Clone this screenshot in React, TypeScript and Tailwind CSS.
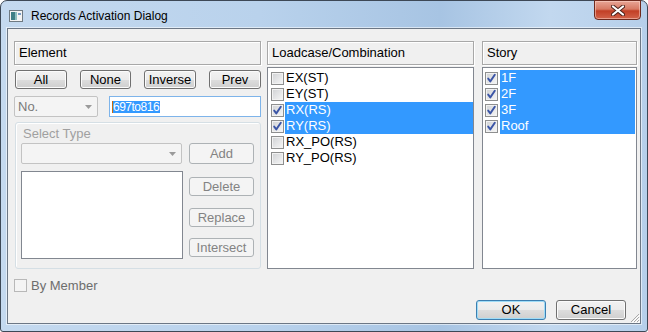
import React from 'react';

const loadcases = [
  { name: 'EX(ST)', on: false },
  { name: 'EY(ST)', on: false },
  { name: 'RX(RS)', on: true },
  { name: 'RY(RS)', on: true },
  { name: 'RX_PO(RS)', on: false },
  { name: 'RY_PO(RS)', on: false },
];

const stories = ['1F', '2F', '3F', 'Roof'];

function Check({ checked, disabled }: { checked?: boolean; disabled?: boolean }) {
  return (
    <span
      className={`relative w-[13px] h-[13px] shrink-0 border ${
        disabled
          ? 'border-[#b8b8b8] bg-[#f4f4f4]'
          : 'border-[#8e8f8f] bg-[linear-gradient(135deg,#cfd1d4,#f7f7f7)] shadow-[inset_0_0_0_1px_#f2f2f2]'
      }`}
    >
      {checked && (
        <svg width="11" height="11" viewBox="0 0 11 11" className="absolute left-0 top-0">
          <path d="M2.2 5.6 L4.3 8.4 L8.8 1.8" fill="none" stroke="#3b55a6" strokeWidth="1.9" strokeLinecap="round" strokeLinejoin="round" />
        </svg>
      )}
    </span>
  );
}

function Button({ children, className = '', disabled, isDefault }: { children: React.ReactNode; className?: string; disabled?: boolean; isDefault?: boolean }) {
  const look = disabled
    ? 'border-[#adb2b5] bg-[#f4f4f4] text-[#838383]'
    : isDefault
    ? 'border-[#3c7fb1] bg-[linear-gradient(#f2f2f2_0%,#ebebeb_50%,#dddddd_50%,#cfcfcf_100%)] text-black shadow-[inset_0_0_0_1px_#9fdcf7]'
    : 'border-[#707070] bg-[linear-gradient(#f2f2f2_0%,#ebebeb_50%,#dddddd_50%,#cfcfcf_100%)] text-black shadow-[inset_0_0_0_1px_#fbfbfb]';
  return (
    <div className={`flex items-center justify-center border rounded-[3px] ${look} ${className}`}>
      {children}
    </div>
  );
}

function Arrow() {
  return (
    <svg width="7" height="4" viewBox="0 0 7 4">
      <path d="M0 0 H7 L3.5 4 Z" fill="#9a9a9a" />
    </svg>
  );
}

function Header({ children }: { children: React.ReactNode }) {
  return (
    <div className="h-[24px] border border-[#a8a8a8] shadow-[1px_1px_0_#ffffff,inset_1px_1px_0_#ffffff] flex items-center pl-[4px]">
      {children}
    </div>
  );
}

export default function App() {
  return (
    <div className="w-[648px] h-[332px] bg-white overflow-hidden font-['Liberation_Sans',Arial,sans-serif] text-[13px] text-black">
      <div className="w-[648px] h-[332px] flex flex-col rounded-t-[7px] rounded-b-[3px] border border-[#3d4856] bg-[linear-gradient(90deg,#c4d9ef_0%,#b9d2ec_40%,#a7c4e3_68%,#c2d8ef_85%,#b6cfea_100%)]">
        {/* Title bar */}
        <div className="h-[27px] flex items-start shrink-0">
          <div className="flex items-center h-[27px] pl-[8px] pt-[2px]">
            <svg width="14" height="12" viewBox="0 0 14 12">
              <rect x="0.5" y="0.5" width="13" height="11" fill="#f4f4f4" stroke="#6f7a82" />
              <rect x="2" y="2" width="4" height="8" fill="#3f7f86" />
              <rect x="6" y="2" width="2" height="8" fill="#8fc0c0" />
              <rect x="9" y="3" width="3" height="2" fill="#7a9cc4" />
            </svg>
            <span className="ml-[8px] text-[12px] text-black">Records Activation Dialog</span>
          </div>
          <div className="ml-auto mr-[6px] -mt-px w-[47px] h-[20px] rounded-b-[4px] border border-[#6e2a1e] bg-[linear-gradient(#e8a596_0%,#d77a64_45%,#c23f25_55%,#d2634a_100%)] shadow-[inset_0_0_0_1px_rgba(255,220,210,0.5)] flex items-center justify-center">
            <svg width="14" height="11" viewBox="0 0 14 11">
              <path d="M2 1.5 L12 9.5 M12 1.5 L2 9.5" stroke="#4a2019" strokeWidth="4" strokeLinecap="round" />
              <path d="M2 1.5 L12 9.5 M12 1.5 L2 9.5" stroke="#ffffff" strokeWidth="2.2" strokeLinecap="round" />
            </svg>
          </div>
        </div>

        {/* Client area */}
        <div className="relative mx-[6px] h-[296px] border border-[#6c7785] bg-[#f0f0f0] flex flex-col shadow-[0_0_0_1px_rgba(255,255,255,0.55)]">
          <div className="flex pt-[12px] pl-[6px]">
            {/* Element column */}
            <div className="w-[247px] flex flex-col">
              <Header>Element</Header>
              <div className="mt-[5px] flex justify-between pl-px">
                <Button className="w-[52px] h-[19px]">All</Button>
                <Button className="w-[51px] h-[19px]">None</Button>
                <Button className="w-[52px] h-[19px]">Inverse</Button>
                <Button className="w-[52px] h-[19px]">Prev</Button>
              </div>
              <div className="mt-[7px] flex h-[21px]">
                <div className="w-[84px] h-[21px] border border-[#c3c3c3] rounded-[2px] bg-[#f4f4f4] flex items-center pl-[3px] pr-[5px] text-[#7a7a7a]">
                  <span>No.</span>
                  <span className="ml-auto"><Arrow /></span>
                </div>
                <div className="ml-[11px] w-[152px] h-[21px] border border-[#7eb4ea] bg-white flex items-center pl-[2px]">
                  <span className="w-px h-[12px] bg-[#c86a10]" />
                  <span className="bg-[#3399ff] text-white text-[12px] tracking-[-0.5px] leading-[12px] pr-[1px]">697to816</span>
                </div>
              </div>
              <div className="mt-[5px] ml-px w-[246px] h-[147px] border border-[#d5dfe5] rounded-[3px] shadow-[inset_1px_1px_0_#ffffff] pl-[5px] flex flex-col">
                <div className="mt-[3px] h-[16px] leading-[16px] pl-[2px] text-[#a0a0a0]">Select Type</div>
                <div className="mt-px flex">
                  <div className="w-[161px] h-[21px] border border-[#c3c3c3] rounded-[2px] bg-[#f4f4f4] flex items-center justify-end pr-[5px]">
                    <Arrow />
                  </div>
                  <Button disabled className="ml-[7px] w-[65px] h-[21px]">Add</Button>
                </div>
                <div className="mt-[7px] flex">
                  <div className="w-[162px] h-[88px] border border-[#828790] bg-white" />
                  <div className="ml-[6px] flex flex-col">
                    <Button disabled className="mt-[6px] w-[65px] h-[19px]">Delete</Button>
                    <Button disabled className="mt-[12px] w-[65px] h-[19px]">Replace</Button>
                    <Button disabled className="mt-[11px] w-[65px] h-[19px]">Intersect</Button>
                  </div>
                </div>
              </div>
            </div>

            {/* Loadcase column */}
            <div className="ml-[6px] w-[207px] flex flex-col">
              <Header>Loadcase/Combination</Header>
              <div className="mt-[2px] h-[202px] border border-[#828790] bg-white pt-[2px]">
                {loadcases.map((lc) => (
                  <div key={lc.name} className="flex h-[16px] items-center pl-[3px]">
                    <Check checked={lc.on} />
                    <span className={`ml-[1px] flex-1 h-[16px] leading-[16px] pl-[1px] ${lc.on ? 'bg-[#3399ff] text-white' : ''}`}>
                      {lc.name}
                    </span>
                  </div>
                ))}
              </div>
            </div>

            {/* Story column */}
            <div className="ml-[8px] w-[155px] flex flex-col">
              <Header>Story</Header>
              <div className="mt-[2px] h-[202px] border border-[#828790] bg-white pt-[2px] pr-[1px]">
                {stories.map((s) => (
                  <div key={s} className="flex h-[16px] items-center pl-[2px]">
                    <Check checked />
                    <span className="ml-[2px] flex-1 h-[16px] leading-[16px] pl-[1px] bg-[#3399ff] text-white">{s}</span>
                  </div>
                ))}
              </div>
            </div>
          </div>

          <div className="mt-[10px] ml-[6px] flex items-center h-[13px]">
            <Check disabled />
            <span className="ml-[4px] text-[#6d6d6d]">By Member</span>
          </div>

          <div className="mt-auto mb-[3px] pr-[14px] flex justify-end">
            <Button isDefault className="w-[70px] h-[20px]">OK</Button>
            <Button className="ml-[10px] w-[70px] h-[20px]">Cancel</Button>
          </div>

          {/* size grip */}
          <svg width="11" height="11" viewBox="0 0 11 11" className="absolute right-0 bottom-0">
            <path d="M10 2 L2 10 M10 5 L5 10 M10 8 L8 10" stroke="#a9a9a9" strokeWidth="1" />
            <path d="M11 3 L3 11 M11 6 L6 11 M11 9 L9 11" stroke="#ffffff" strokeWidth="1" />
          </svg>
        </div>
      </div>
    </div>
  );
}
